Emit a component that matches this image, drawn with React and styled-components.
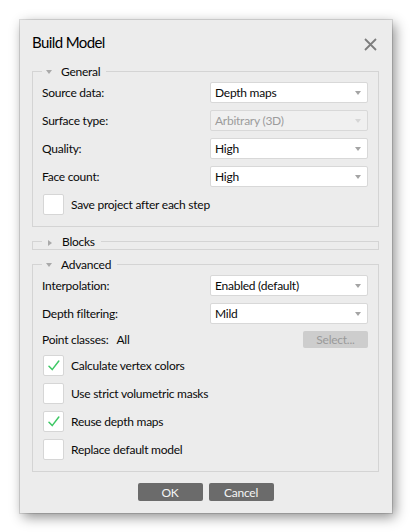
import React from "react";
import styled, { createGlobalStyle } from "styled-components";

const Global = createGlobalStyle`
    html, body {
        margin: 0;
        padding: 0;
        background: #ffffff;
    }
    body {
        font-family: Lato, "Noto Sans", sans-serif;
        font-size: 12px;
        letter-spacing: -0.25px;
        color: #0a0a0a;
    }
`

const Page = styled.div`
    padding: 20px 0 0 20px;
    height: 532px;
    box-sizing: border-box;
`

const Dialog = styled.div`
    width: 372px;
    background: #ececec;
    box-shadow: 0 0 0 1px rgba(0, 0, 0, 0.12), 3px 4px 12px rgba(0, 0, 0, 0.45);
    padding: 0 13px 12px 12px;
    box-sizing: border-box;
    display: flex;
    flex-direction: column;
`

const Header = styled.div`
    display: flex;
    align-items: center;
    justify-content: space-between;
    padding: 12px 2px 0 0;
    height: 32px;
    box-sizing: border-box;
    margin-bottom: 12px;
`

const Title = styled.div`
    font-size: 15px;
    letter-spacing: -0.6px;
    line-height: 21px;
    color: #000;
`

const Close = styled.svg`
    width: 13px;
    height: 13px;
    margin-top: 4px;
`

const Group = styled.fieldset`
    margin: 0 0 7px 0;
    min-width: 0;
    border: 1px solid #d4d4d4;
    padding: ${p => (p.$collapsed ? "0" : "3px 10px 11px 9px")};
    display: flex;
    flex-direction: column;
    gap: 7px;
`

const Legend = styled.legend`
    height: 15px;
    line-height: 15px;
    padding: 0 6px 0 4px;
    margin-left: ${p => (p.$collapsed ? "9px" : "0")};
    font-size: 12px;
`

const Arrow = styled.span`
    display: inline-block;
    width: 0;
    height: 0;
    margin-right: 9px;
    vertical-align: 2px;
    border-style: solid;
    ${p => p.$open
        ? "border-width: 4px 3.5px 0 3.5px; border-color: #a9a9a9 transparent transparent transparent;"
        : "border-width: 3.5px 0 3.5px 4px; border-color: transparent transparent transparent #a9a9a9; margin-left: 2px; margin-right: 10px; vertical-align: 0;"}
`

const Row = styled.div`
    display: grid;
    grid-template-columns: 1fr 158px;
    align-items: center;
    height: 21px;
`

const Label = styled.span``

const Combo = styled.div`
    height: 21px;
    box-sizing: border-box;
    border: 1px solid #d8d8d8;
    border-radius: 2px;
    background: ${p => (p.$disabled ? "#f0f0f0" : "#ffffff")};
    color: ${p => (p.$disabled ? "#9c9c9c" : "#0a0a0a")};
    padding: 0 6px 0 4px;
    display: flex;
    align-items: center;
    justify-content: space-between;
`

const ComboArrow = styled.span`
    width: 0;
    height: 0;
    border-style: solid;
    border-width: 4px 3.5px 0 3.5px;
    border-color: ${p => (p.$disabled ? "#d6d6d6" : "#a4a4a4")} transparent transparent transparent;
`

const CheckRow = styled.label`
    display: flex;
    align-items: center;
    height: 21px;
    gap: 7px;
    padding-left: 1px;
`

const Box = styled.span`
    width: 21px;
    height: 21px;
    box-sizing: border-box;
    border: 1px solid #d6d6d6;
    border-radius: 2px;
    background: #fff;
    display: flex;
    align-items: center;
    justify-content: center;
`

const ClassesRow = styled.div`
    display: flex;
    align-items: center;
    height: 17px;
`

const ClassesValue = styled.span`
    margin-left: 8px;
    flex: 1;
`

const SmallButton = styled.button`
    width: 65px;
    height: ${p => (p.$disabled ? "17px" : "18px")};
    border: none;
    border-radius: 2px;
    font-family: inherit;
    letter-spacing: inherit;
    font-size: 12px;
    padding: 0;
    background: ${p => (p.$disabled ? "#cdcdcd" : "#6b6b6b")};
    color: ${p => (p.$disabled ? "#9a9a9a" : "#f4f4f4")};
`

const Footer = styled.div`
    display: flex;
    justify-content: center;
    gap: 6px;
    margin-top: 4px;
`

function Select({ value, disabled }) {
    return <Combo $disabled={disabled}>
        <span>{value}</span>
        <ComboArrow $disabled={disabled} />
    </Combo>
}

function Check({ checked, children }) {
    return <CheckRow>
        <Box>
            {checked && <svg width="12" height="11" viewBox="0 0 12 11">
                <path d="M1 6.2 L4.2 9.6 L10.8 1" fill="none" stroke="#3ec865" strokeWidth="1.5" strokeLinecap="round" strokeLinejoin="round" />
            </svg>}
        </Box>
        <span>{children}</span>
    </CheckRow>
}

export default function App() {
    return <Page>
        <Global />
        <Dialog>
            <Header>
                <Title>Build Model</Title>
                <Close viewBox="0 0 13 13">
                    <path d="M1 1 L12 12 M12 1 L1 12" stroke="#7d7d7d" strokeWidth="1.8" />
                </Close>
            </Header>

            <Group>
                <Legend><Arrow $open />General</Legend>
                <Row><Label>Source data:</Label><Select value="Depth maps" /></Row>
                <Row><Label>Surface type:</Label><Select value="Arbitrary (3D)" disabled /></Row>
                <Row><Label>Quality:</Label><Select value="High" /></Row>
                <Row><Label>Face count:</Label><Select value="High" /></Row>
                <Check>Save project after each step</Check>
            </Group>

            <Group $collapsed>
                <Legend $collapsed><Arrow />Blocks</Legend>
            </Group>

            <Group>
                <Legend><Arrow $open />Advanced</Legend>
                <Row><Label>Interpolation:</Label><Select value="Enabled (default)" /></Row>
                <Row><Label>Depth filtering:</Label><Select value="Mild" /></Row>
                <ClassesRow>
                    <Label>Point classes:</Label>
                    <ClassesValue>All</ClassesValue>
                    <SmallButton $disabled>Select...</SmallButton>
                </ClassesRow>
                <Check checked>Calculate vertex colors</Check>
                <Check>Use strict volumetric masks</Check>
                <Check checked>Reuse depth maps</Check>
                <Check>Replace default model</Check>
            </Group>

            <Footer>
                <SmallButton>OK</SmallButton>
                <SmallButton>Cancel</SmallButton>
            </Footer>
        </Dialog>
    </Page>
}
